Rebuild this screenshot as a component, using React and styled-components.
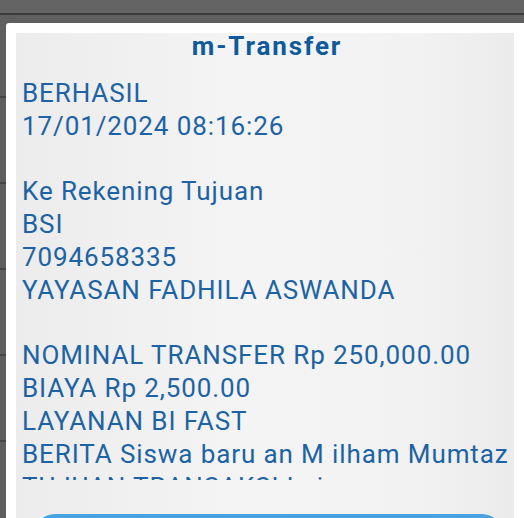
import styled, { createGlobalStyle } from "styled-components";

const GlobalStyle = createGlobalStyle`
  html, body {
    margin: 0;
    padding: 0;
    background: #5f5f5f;
    overflow: hidden;
  }
  body {
    font-family: Roboto, "Liberation Sans", sans-serif;
  }
`;

const Screen = styled.div`
  position: relative;
  width: 524px;
  height: 518px;
  overflow: hidden;
  background: #5f5f5f;
`;

const TopBar = styled.div`
  height: 13px;
  background: #646464;
  border-bottom: 2px solid #3b3b3b;
`;

const List = styled.div`
  display: flex;
  flex-direction: column;
`;

const ListRow = styled.div`
  height: ${(p) => p.h}px;
  border-bottom: 2px solid #454545;
  box-sizing: border-box;
`;

const Dialog = styled.div`
  position: absolute;
  top: 23px;
  left: 6px;
  width: 518px;
  height: 520px;
  box-sizing: border-box;
  padding: 10px 10px 0 10px;
  background: #ffffff;
  border-radius: 3px 0 0 0;
`;

const Panel = styled.div`
  height: 100%;
  display: flex;
  flex-direction: column;
  background: linear-gradient(90deg, #ececec 0%, #f4f4f4 45%, #f2f2f2 80%, #ebebeb 100%);
`;

const Title = styled.h1`
  flex-shrink: 0;
  margin: 0;
  height: 26px;
  line-height: 26px;
  text-align: center;
  font-size: 26px;
  font-weight: 700;
  color: #0f5a9b;
  letter-spacing: 1.9px;
  padding-left: 4px;
`;

const Scroll = styled.div`
  flex-shrink: 0;
  height: 421px;
  overflow: hidden;
  box-sizing: border-box;
  padding: 18px 0 0 6px;
`;

const Line = styled.div`
  height: 32.8px;
  line-height: 32.8px;
  font-size: 26px;
  letter-spacing: 0.9px;
  color: #1d63a3;
  white-space: nowrap;
`;

const Button = styled.div`
  flex-shrink: 0;
  margin: 34px 12px 0 19px;
  height: 40px;
  border-radius: 20px;
  background: #48a2df;
`;

const lines = [
  "BERHASIL",
  "17/01/2024 08:16:26",
  "",
  "Ke Rekening Tujuan",
  "BSI",
  "7094658335",
  "YAYASAN FADHILA ASWANDA",
  "",
  "NOMINAL TRANSFER Rp 250,000.00",
  "BIAYA Rp 2,500.00",
  "LAYANAN BI FAST",
  "BERITA Siswa baru an M ilham Mumtaz",
  "TUJUAN TRANSAKSI Lainnya",
];

const rows = [83, 86, 86, 86, 86, 86];

export default function App() {
  return (
    <>
      <GlobalStyle />
      <Screen>
        <TopBar />
        <List>
          {rows.map((h, i) => (
            <ListRow key={i} h={h} />
          ))}
        </List>
        <Dialog>
          <Panel>
            <Title>m-Transfer</Title>
            <Scroll>
              {lines.map((t, i) => (
                <Line key={i}>{t || "\u00a0"}</Line>
              ))}
            </Scroll>
            <Button />
          </Panel>
        </Dialog>
      </Screen>
    </>
  );
}
